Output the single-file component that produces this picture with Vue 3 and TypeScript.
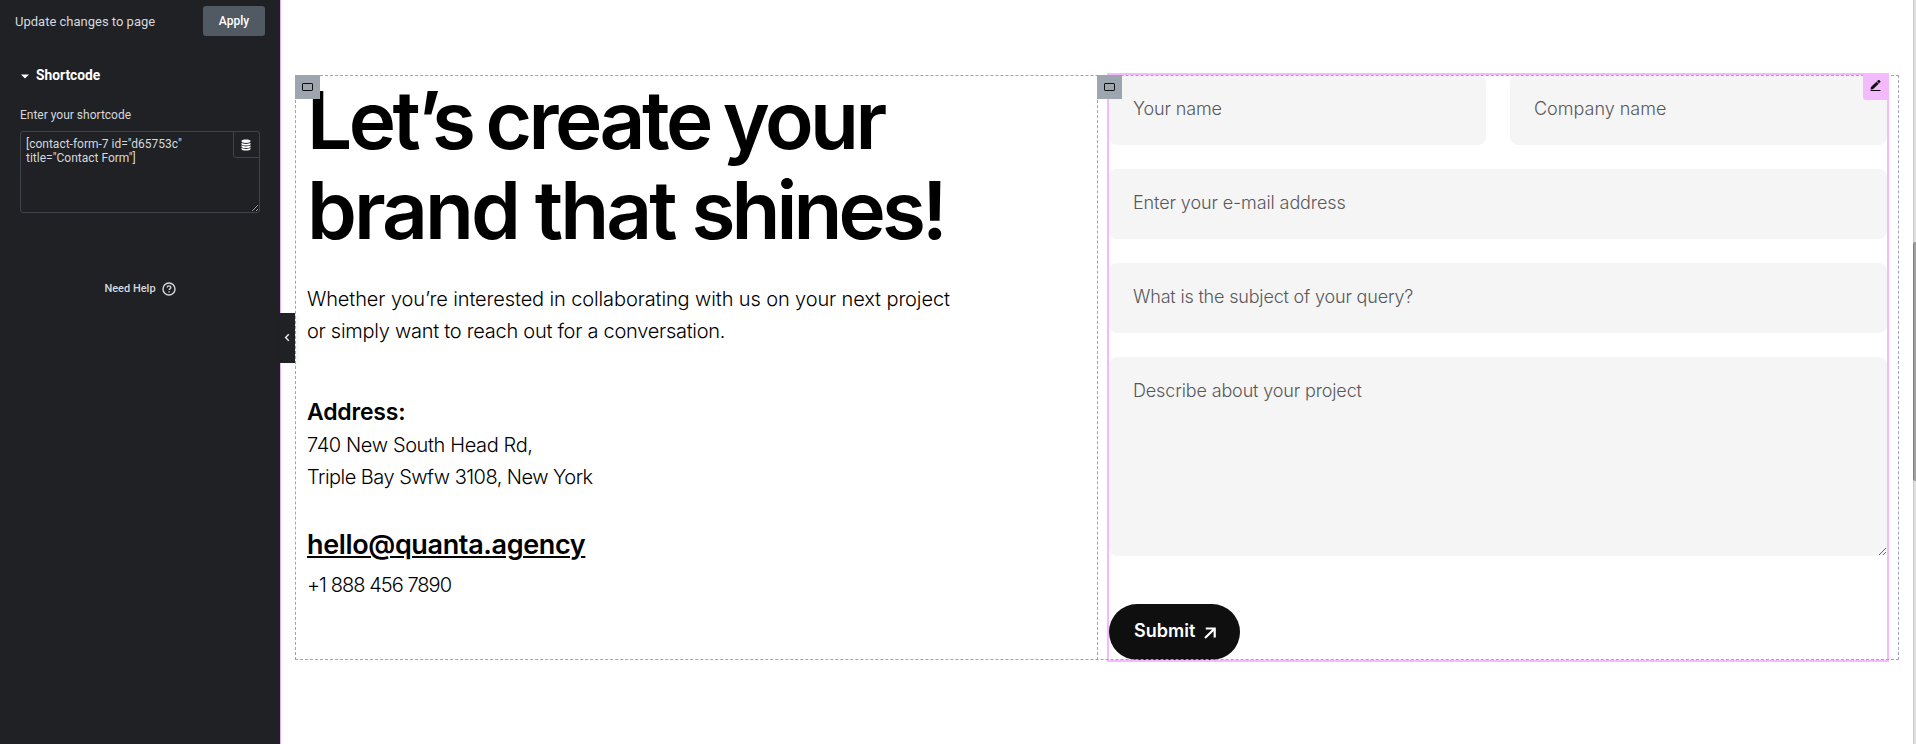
<script setup lang="ts">
import { ref } from 'vue'

interface Field {
  id: string
  placeholder: string
  wide: boolean
}

const shortcode = ref('[contact-form-7 id="d65753c"\ntitle="Contact Form"]')

const fields: Field[] = [
  { id: 'name', placeholder: 'Your name', wide: false },
  { id: 'company', placeholder: 'Company name', wide: false },
  { id: 'email', placeholder: 'Enter your e-mail address', wide: true },
  { id: 'subject', placeholder: 'What is the subject of your query?', wide: true },
]
</script>

<template>
  <div class="editor">
    <aside class="panel">
      <header class="panel-head">
        <span class="head-text">Update changes to page</span>
        <button class="apply" type="button">Apply</button>
      </header>
      <div class="section-title">
        <svg width="8" height="5" viewBox="0 0 8 5"><path d="M0 .4h8L4 4.4z" fill="#fff" /></svg>
        <span>Shortcode</span>
      </div>
      <label class="control-label" for="shortcode">Enter your shortcode</label>
      <div class="control">
        <textarea id="shortcode" v-model="shortcode" class="code" spellcheck="false"></textarea>
        <button class="dynamic" type="button" aria-label="Dynamic tags">
          <svg width="10" height="12" viewBox="0 0 10 12" fill="#fff">
            <path d="M.5 2C.5 1 2.3.5 5 .5S9.500 1 9.500 2v.6C9.500 3.500 7.500 4 5 4S.5 3.500.5 2.600z" />
            <path d="M.5 3.800C1.500 4.600 3 4.900 5 4.900s3.500-.3 4.500-1.100v1.400C9.500 6 7.500 6.500 5 6.500S.5 6 .5 5.200z" />
            <path d="M.5 6.300C1.500 7.100 3 7.400 5 7.400s3.500-.3 4.500-1.100v1.400C9.500 8.500 7.500 9 5 9S.5 8.500.5 7.700z" />
            <path d="M.5 8.800C1.500 9.600 3 9.900 5 9.900s3.500-.3 4.500-1.100v1.200c0 1-2 1.500-4.500 1.500S.5 11 .5 10z" />
          </svg>
        </button>
      </div>
      <div class="help">
        <span>Need Help</span>
        <svg width="14" height="14" viewBox="0 0 14 14" fill="none" stroke="#d5d8dc" stroke-width="1.400">
          <circle cx="7" cy="7" r="6" />
          <path d="M5.200 5.600c0-1 .8-1.700 1.800-1.700s1.800.7 1.800 1.600c0 1.200-1.700 1.300-1.700 2.500" />
          <path d="M7.100 9.200v1.300" />
        </svg>
      </div>
      <button class="collapse" type="button" aria-label="Hide panel">
        <svg width="6" height="9" viewBox="0 0 6 9" fill="none" stroke="#e6e9ec" stroke-width="1.500"><path d="M4.800 1.200 1.600 4.500l3.200 3.300" /></svg>
      </button>
    </aside>

    <main class="canvas">
      <section class="row">
        <div class="col info">
          <h1><span class="h-one">Let’s create your</span><span class="h-two">brand that <em>shines!</em></span></h1>
          <p class="lead">
            <span class="l-one">Whether you’re interested in collaborating with us on your next project</span>
            <span class="l-two">or simply want to reach out for a conversation.</span>
          </p>
          <h2>Address:</h2>
          <p class="address">
            <span class="a-one">740 New South Head Rd,</span>
            <span class="a-two">Triple Bay Swfw 3108, New York</span>
          </p>
          <a class="mail">hello@quanta.agency</a>
          <p class="phone">+1 888 456 7890</p>
          <span class="handle"><svg width="11" height="8" viewBox="0 0 11 8"><rect x=".5" y=".5" width="10" height="7" rx=".6" fill="none" stroke="#0c0d0e" /></svg></span>
        </div>
        <div class="col form-col">
          <form class="form" @submit.prevent>
            <input v-for="f in fields" :key="f.id" :class="['field', f.id, { wide: f.wide }]" :placeholder="f.placeholder" type="text" />
            <textarea class="field message wide" placeholder="Describe about your project"></textarea>
            <button class="submit" type="submit">
              <span>Submit</span>
              <svg width="12" height="12" viewBox="0 0 12 12" fill="none" stroke="#fff" stroke-width="2.200"><path d="M1 11 10.500 1.700M1.800 1.500h8.900v8.900" /></svg>
            </button>
          </form>
          <div class="selection">
            <span class="edit">
              <svg width="11" height="12" viewBox="0 0 11 12"><path d="M.8 9.200 1.200 7 6.600 1.900 8.500 3.800 3 9z M7.200 1.300 8.300.3c.3-.3.7-.3 1 0l.8.8c.3.300.3.700 0 1L9.100 3.200z" fill="#0c0d0e" stroke="#0c0d0e" stroke-width=".4" /><path d="M.5 10.500h10" stroke="#0c0d0e" /></svg>
            </span>
          </div>
          <span class="handle"><svg width="11" height="8" viewBox="0 0 11 8"><rect x=".5" y=".5" width="10" height="7" rx=".6" fill="none" stroke="#0c0d0e" /></svg></span>
        </div>
        <div class="outline"></div>
      </section>
    </main>
    <div class="scroll"><div class="thumb"></div></div>
  </div>
</template>

<style>
body {
  background: #fff;
  overflow: hidden;
}
</style>

<style scoped>
* {
  box-sizing: border-box;
  margin: 0;
}
svg {
  display: block;
  flex: none;
}
button,
input,
textarea {
  border: 0;
  padding: 0;
  font: inherit;
  outline: 0;
}
.editor {
  display: flex;
  height: 744px;
  font-family: Inter, "Liberation Sans", sans-serif;
  color: #000;
}
.panel {
  position: relative;
  width: 280px;
  background: #1f2124;
  color: #d5d8dc;
  font: 12px/14px Roboto, sans-serif;
  flex: none;
}
.panel-head {
  display: flex;
  justify-content: space-between;
  align-items: center;
  height: 42px;
  padding: 0 15px;
  font-size: 13px;
}
.head-text {
  padding-top: 2px;
}
.apply {
  width: 62px;
  height: 30px;
  border-radius: 3px;
  background: #515962;
  color: #fff;
  font-size: 12px;
  font-weight: 500;
}
.section-title {
  display: flex;
  align-items: center;
  gap: 7px;
  height: 30px;
  margin-top: 18px;
  padding: 0 21px;
  color: #fff;
  font-size: 13.8px;
  font-weight: 700;
}
.section-title svg {
  margin-top: 2px;
}
.control-label {
  display: block;
  margin: 18px 20px 0;
  height: 23px;
  line-height: 14px;
}
.control {
  position: relative;
  height: 82px;
  margin: 0 20px;
}
.code {
  display: block;
  width: 240px;
  height: 82px;
  padding: 5px;
  border: 1px solid #3f444b;
  border-radius: 3px;
  background: transparent;
  color: #d5d8dc;
  line-height: 14px;
  resize: vertical;
  overflow: hidden;
  color-scheme: dark;
}
.dynamic {
  position: absolute;
  top: 0;
  right: 0;
  display: grid;
  place-items: center;
  width: 27px;
  height: 27px;
  padding-right: 1px;
  border: 1px solid #3f444b;
  border-radius: 0 3px 0 3px;
  background: #1f2124;
}
.help {
  display: flex;
  justify-content: center;
  align-items: center;
  gap: 6px;
  margin-top: 69px;
  font-size: 11px;
  font-weight: 500;
}
.collapse {
  position: absolute;
  top: 313px;
  left: 280px;
  z-index: 3;
  display: grid;
  place-items: center;
  width: 15px;
  height: 50px;
  padding: 0 1px 1px 0;
  background: #1f2124;
  box-shadow: 3px 1px 5px rgba(0, 0, 0, 0.05);
}
.canvas {
  flex: 1;
  padding: 75px 14px 84px;
  border-left: 1px solid #e8b0f5;
}
.row {
  position: relative;
  display: grid;
  grid-template-columns: 802px 802px;
  height: 585px;
}
.outline {
  position: absolute;
  inset: 0;
  z-index: 1;
  border: 1px dashed #9da5ae;
  pointer-events: none;
}
.col {
  position: relative;
  padding: 0 12px;
}
.form-col {
  border-left: 1px dashed #9da5ae;
  padding-left: 11px;
}
.handle {
  position: absolute;
  top: 0;
  left: 0;
  z-index: 2;
  display: grid;
  place-items: center;
  width: 25px;
  height: 24px;
  background: #9da5ae;
}
.form-col .handle {
  left: -1px;
}
.info span {
  white-space: nowrap;
}
h1 {
  font-size: 80px;
  line-height: 90px;
  font-weight: 600;
}
h1 span,
p span {
  display: block;
}
.h-one {
  letter-spacing: -3.55px;
  word-spacing: -3.4px;
}
.h-two {
  letter-spacing: -2.95px;
  word-spacing: -0.4px;
}
.h-two em {
  font-style: normal;
  letter-spacing: -3.9px;
}
p {
  font-size: 20px;
  line-height: 32px;
  font-weight: 350;
}
.lead {
  margin-top: 28px;
}
.l-one {
  letter-spacing: -0.12px;
}
.l-two {
  letter-spacing: -0.27px;
}
h2 {
  margin: 49px 0 1px;
  font-size: 23px;
  line-height: 32px;
  font-weight: 600;
  letter-spacing: -0.2px;
}
.a-one {
  letter-spacing: -0.38px;
}
.a-two {
  letter-spacing: -0.53px;
}
.mail {
  display: block;
  margin-top: 34px;
  font-size: 27px;
  line-height: 36px;
  font-weight: 600;
  letter-spacing: -0.36px;
  text-decoration: underline;
  text-decoration-thickness: 2px;
  text-underline-offset: 2px;
}
.phone {
  margin-top: 6px;
  letter-spacing: -0.96px;
}
.form {
  display: grid;
  grid-template-columns: 377px 377px;
  gap: 24px;
}
.field {
  width: 100%;
  height: 70px;
  padding: 0 24px 4px;
  border-radius: 8px;
  background: #f5f5f5;
  font-size: 18px;
  font-weight: 350;
  letter-spacing: -0.14px;
}
.field::placeholder {
  color: #58585c;
  opacity: 1;
}
.wide {
  grid-column: span 2;
}
.company {
  letter-spacing: 0;
}
.email {
  letter-spacing: -0.11px;
}
.subject {
  letter-spacing: -0.18px;
}
.message {
  height: 199px;
  padding: 22px 24px;
  line-height: 24px;
  resize: vertical;
}
.submit {
  display: flex;
  align-items: center;
  gap: 9px;
  width: 131px;
  height: 56px;
  margin-top: 24px;
  padding: 0 25px;
  border-radius: 28px;
  background: #0f0f0f;
  color: #fff;
  font-size: 18px;
  font-weight: 600;
}
.submit span {
  padding-bottom: 3px;
}
.submit svg {
  margin-top: 1px;
}
.selection {
  position: absolute;
  inset: -2px 10px -2px 9px;
  border: 2px solid #f3bafd;
  pointer-events: none;
}
.edit {
  position: absolute;
  top: -2px;
  right: -2px;
  z-index: 2;
  display: grid;
  place-items: center;
  width: 26px;
  height: 27px;
  padding: 0 2px 1px 0;
  border-radius: 0 0 0 3px;
  background: #f3bafd;
}
.scroll {
  width: 3px;
  flex: none;
  padding-top: 242px;
  border-left: 1px solid #e8b0f5;
  background: #e0e0e0;
}
.thumb {
  height: 239px;
  margin-left: -1px;
  border-left: 1px solid #78828e;
  border-radius: 3px 0 0 3px;
  background: #a0a0a0;
}
</style>
